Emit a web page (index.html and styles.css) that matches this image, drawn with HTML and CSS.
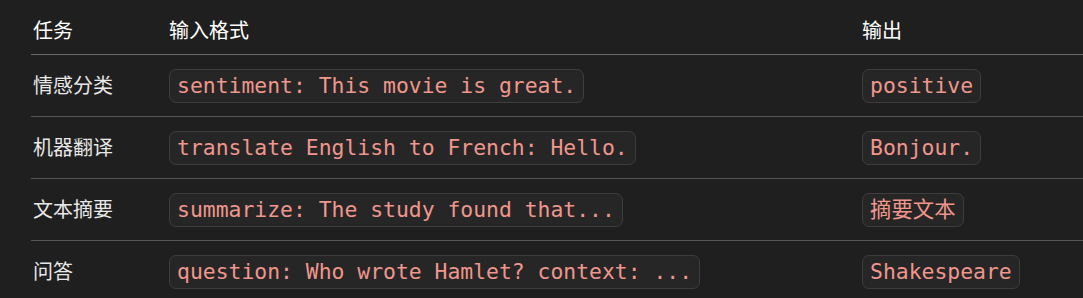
FILE: index.html
```html
<!DOCTYPE html>
<html lang="zh">
<head>
<meta charset="utf-8">
<link rel="stylesheet" href="styles.css">
</head>
<body>
<table class="tasks">
  <thead>
    <tr><th class="c1">任务</th><th class="c2">输入格式</th><th class="c3">输出</th></tr>
  </thead>
  <tbody>
    <tr><td>情感分类</td><td><code>sentiment: This movie is great.</code></td><td><code>positive</code></td></tr>
    <tr><td>机器翻译</td><td><code>translate English to French: Hello.</code></td><td><code>Bonjour.</code></td></tr>
    <tr><td>文本摘要</td><td><code>summarize: The study found that...</code></td><td><code>摘要文本</code></td></tr>
    <tr><td>问答</td><td><code>question: Who wrote Hamlet? context: ...</code></td><td><code>Shakespeare</code></td></tr>
  </tbody>
</table>
</body>
</html>
```
FILE: styles.css
```css
html, body {
  margin: 0;
  padding: 0;
  background: #1f1f1f;
  overflow: hidden;
}
body {
  font-family: "Noto Sans CJK SC", "Noto Sans", sans-serif;
  font-size: 20px;
  color: #e8e8e8;
}
.tasks {
  margin-left: 31px;
  width: calc(100% - 31px);
  border-collapse: collapse;
  table-layout: fixed;
}
.c1 { width: 136px; }
.c2 { width: 693px; }
.tasks th {
  text-align: left;
  font-weight: 400;
  color: #ffffff;
  height: 54px;
  padding: 0 2px 10px;
  box-sizing: border-box;
  vertical-align: bottom;
  line-height: 28px;
  border-bottom: 1px solid #6a6a6a;
}
.tasks td {
  height: 62px;
  padding: 0 2px;
  box-sizing: border-box;
  vertical-align: middle;
  border-bottom: 1px solid #555555;
  line-height: 28px;
}
code {
  font-family: "DejaVu Sans Mono", "Noto Sans CJK SC", monospace;
  font-size: 21.4px;
  color: #f0968d;
  background: #262626;
  border: 1px solid #3d3d3d;
  border-radius: 7px;
  padding: 3px 7px 4px;
  line-height: 28px;
}
```
